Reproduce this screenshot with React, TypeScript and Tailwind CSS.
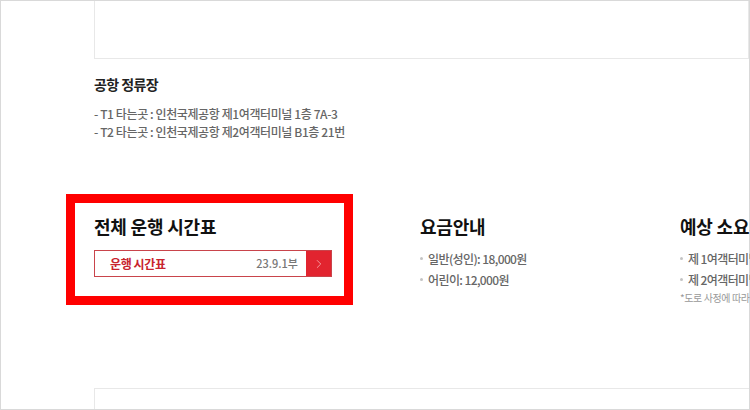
import { ChevronRight } from "lucide-react";

const font = { fontFamily: '"Noto Sans CJK KR", "Noto Sans", sans-serif' };

function Dot() {
  return <span className="mt-[9px] h-[3px] w-[3px] shrink-0 rounded-full bg-[#c4c4c4]" />;
}

export default function App() {
  return (
    <div className="h-[410px] w-[750px] overflow-hidden bg-white" style={font}>
      <div className="flex h-full flex-col border border-[#d9d9d9] pl-[93px]">
        <div className="h-[58px] shrink-0 border-x border-b border-[#e8e8e8]" />

        <div className="mt-[15px]">
          <h3 className="text-[14px] font-bold leading-5 tracking-[-0.6px] text-[#222]">공항 정류장</h3>
          <ul className="mt-[11px] text-[12px] font-medium leading-[18px] tracking-[-0.4px] text-[#666]">
            <li>- T1 타는곳 : 인천국제공항 제1여객터미널 1층 7A-3</li>
            <li>- T2 타는곳 : 인천국제공항 제2여객터미널 B1층 21번</li>
          </ul>
        </div>

        <div className="mt-[72px] flex h-[110px] shrink-0">
          <div className="relative w-[324px] shrink-0">
            <div className="pointer-events-none absolute -top-[19px] -left-[28px] h-[111px] w-[287px] border-[9px] border-[#ff0000]" />
            <h2 className="text-[18px] font-bold leading-[26px] tracking-[-0.2px] text-[#111]">전체 운행 시간표</h2>
            <a className="mt-[11px] flex h-[27px] w-[238px] border border-[#c9444b]">
              <span className="flex-1 pl-[15px] text-[12px] font-semibold leading-[25px] tracking-[-0.4px] text-[#c8242e]">운행 시간표</span>
              <span className="pr-[8px] text-[11px] font-medium leading-[25px] text-[#777]">23.9.1부</span>
              <span className="grid w-[25px] place-items-center bg-[#e2242f] text-[#f6a5a9]">
                <ChevronRight className="h-3.5 w-3.5" strokeWidth={1.5} />
              </span>
            </a>
          </div>

          <div className="w-[262px] shrink-0 pl-[2px]">
            <h2 className="text-[18px] font-bold leading-[26px] tracking-[-0.2px] text-[#111]">요금안내</h2>
            <ul className="mt-[9px] text-[12px] font-medium leading-[21px] tracking-[-0.6px] text-[#666]">
              <li className="flex gap-[5px]"><Dot />일반(성인): 18,000원</li>
              <li className="flex gap-[5px]"><Dot />어린이: 12,000원</li>
            </ul>
          </div>

          <div className="shrink-0 whitespace-nowrap">
            <h2 className="text-[18px] font-bold leading-[26px] tracking-[-0.2px] text-[#111]">예상 소요시간</h2>
            <ul className="mt-[9px] text-[12px] font-medium leading-[21px] tracking-[-0.6px] text-[#666]">
              <li className="flex gap-[5px]"><Dot />제 1여객터미널: 약 60분</li>
              <li className="flex gap-[5px]"><Dot />제 2여객터미널: 약 75분</li>
            </ul>
            <p className="text-[10px] leading-[16px] tracking-[-0.4px] text-[#999]">*도로 사정에 따라 소요시간이 달라질 수 있습니다.</p>
          </div>
        </div>

        <div className="mt-[65px] flex-1 border-t border-l border-[#e8e8e8]" />
      </div>
    </div>
  );
}
